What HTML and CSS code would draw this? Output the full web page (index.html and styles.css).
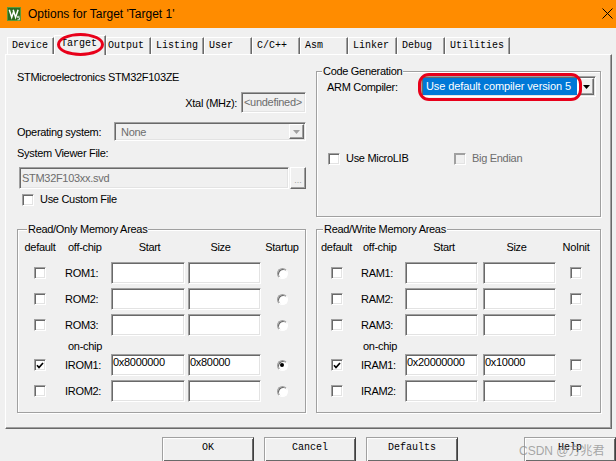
FILE: index.html
```html
<!DOCTYPE html>
<html>
<head>
<meta charset="utf-8">
<title>Options for Target 'Target 1'</title>
<link rel="stylesheet" href="styles.css">
</head>
<body>
<div class="window">
  <header class="titlebar">
    <svg class="appicon" width="14" height="14" viewBox="0 0 14 14"><rect x="0.5" y="0.5" width="13" height="13" fill="#2f6b1f" stroke="#5a9a3a"/><path d="M2.3 2.8l2.4 7.6 2-6.2M6.2 2.8l2.4 7.6 2.5-7.6" stroke="#fff" stroke-width="1.5" fill="none"/><path d="M12.6 9.3h-2v1.4h1.9v2h-2" stroke="#fff" stroke-width="0.8" fill="none"/></svg>
    <span class="title">Options for Target 'Target 1'</span>
    <svg class="close" width="11" height="11" viewBox="0 0 11 11"><path d="M0.5 0.5L10.5 10.5M10.5 0.5L0.5 10.5" stroke="#000" stroke-width="1" fill="none"/></svg>
  </header>

  <div class="client">
    <nav class="tabs">
      <div class="tab t-device">Device</div>
      <div class="tab t-target selected">Target</div>
      <div class="tab t-output">Output</div>
      <div class="tab t-listing">Listing</div>
      <div class="tab t-user">User</div>
      <div class="tab t-cc">C/C++</div>
      <div class="tab t-asm">Asm</div>
      <div class="tab t-linker">Linker</div>
      <div class="tab t-debug">Debug</div>
      <div class="tab t-util">Utilities</div>
    </nav>

    <section class="panel">
      <div class="device">
        <div class="dev-name">STMicroelectronics STM32F103ZE</div>
        <div class="xtal-row">
          <span>Xtal (MHz):</span>
          <div class="field disabled xtal">&lt;undefined&gt;</div>
        </div>
        <div class="os-row">
          <span class="os-label">Operating system:</span>
          <div class="field disabled combo os">
            <span class="combo-text">None</span>
            <span class="arrow-btn"><svg width="7" height="4" viewBox="0 0 7 4"><path d="M0 0h7L3.5 4z" fill="#a0a0a0"/></svg></span>
          </div>
        </div>
        <div class="svf-label">System Viewer File:</div>
        <div class="svd-row">
          <div class="field disabled svd">STM32F103xx.svd</div>
          <div class="dots">...</div>
        </div>
        <div class="check-row custom"><span class="chk"></span><span>Use Custom File</span></div>
      </div>

      <fieldset class="group codegen">
        <legend>Code Generation</legend>
        <div class="arm-row">
          <span class="arm-label">ARM Compiler:</span>
          <div class="field combo compiler">
            <span class="sel">Use default compiler version 5</span>
            <span class="arrow-btn"><svg width="7" height="4" viewBox="0 0 7 4"><path d="M0 0h7L3.5 4z" fill="#000"/></svg></span>
          </div>
        </div>
        <div class="lib-row">
          <div class="check-row microlib"><span class="chk"></span><span>Use MicroLIB</span></div>
          <div class="check-row endian disabled"><span class="chk"></span><span>Big Endian</span></div>
        </div>
      </fieldset>

      <fieldset class="group mem rom">
        <legend>Read/Only Memory Areas</legend>
        <div class="mem-grid rom-grid">
          <span class="hd c">default</span><span class="hd off">off-chip</span><span class="hd c">Start</span><span class="hd c size-hd">Size</span><span class="hd c">Startup</span>

          <span class="cell"><span class="chk"></span></span><span class="lbl">ROM1:</span><div class="field mem-in start"></div><div class="field mem-in"></div><span class="cell"><span class="radio"></span></span>
          <span class="cell"><span class="chk"></span></span><span class="lbl">ROM2:</span><div class="field mem-in start"></div><div class="field mem-in"></div><span class="cell"><span class="radio"></span></span>
          <span class="cell"><span class="chk"></span></span><span class="lbl">ROM3:</span><div class="field mem-in start"></div><div class="field mem-in"></div><span class="cell"><span class="radio"></span></span>

          <span class="hd off onchip">on-chip</span>

          <span class="cell"><span class="chk checked"><svg width="8" height="7" viewBox="0 0 8 7"><path d="M1 3.3l2 2.2L7 1" stroke="#000" stroke-width="1.7" fill="none"/></svg></span></span><span class="lbl">IROM1:</span><div class="field mem-in start">0x8000000</div><div class="field mem-in">0x80000</div><span class="cell"><span class="radio on"><span class="dot"></span></span></span>
          <span class="cell"><span class="chk"></span></span><span class="lbl">IROM2:</span><div class="field mem-in start"></div><div class="field mem-in"></div><span class="cell"><span class="radio"></span></span>
        </div>
      </fieldset>

      <fieldset class="group mem ram">
        <legend>Read/Write Memory Areas</legend>
        <div class="mem-grid ram-grid">
          <span class="hd c">default</span><span class="hd off">off-chip</span><span class="hd c">Start</span><span class="hd c size-hd">Size</span><span class="hd c">NoInit</span>

          <span class="cell"><span class="chk"></span></span><span class="lbl">RAM1:</span><div class="field mem-in"></div><div class="field mem-in"></div><span class="cell"><span class="chk"></span></span>
          <span class="cell"><span class="chk"></span></span><span class="lbl">RAM2:</span><div class="field mem-in"></div><div class="field mem-in"></div><span class="cell"><span class="chk"></span></span>
          <span class="cell"><span class="chk"></span></span><span class="lbl">RAM3:</span><div class="field mem-in"></div><div class="field mem-in"></div><span class="cell"><span class="chk"></span></span>

          <span class="hd off onchip">on-chip</span>

          <span class="cell"><span class="chk checked"><svg width="8" height="7" viewBox="0 0 8 7"><path d="M1 3.3l2 2.2L7 1" stroke="#000" stroke-width="1.7" fill="none"/></svg></span></span><span class="lbl">IRAM1:</span><div class="field mem-in">0x20000000</div><div class="field mem-in">0x10000</div><span class="cell"><span class="chk"></span></span>
          <span class="cell"><span class="chk"></span></span><span class="lbl">IRAM2:</span><div class="field mem-in"></div><div class="field mem-in"></div><span class="cell"><span class="chk"></span></span>
        </div>
      </fieldset>
    </section>

    <div class="buttons">
      <div class="btn">OK</div>
      <div class="btn">Cancel</div>
      <div class="btn">Defaults</div>
      <div class="btn help">Help</div>
    </div>
  </div>

  <div class="mark mark-tab"></div>
  <div class="mark mark-compiler"></div>
  <div class="watermark">CSDN @方兆君子</div>
</div>
</body>
</html>
```

FILE: styles.css
```css
* { box-sizing: border-box; }
html, body { margin: 0; padding: 0; }
body {
  width: 616px;
  height: 461px;
  overflow: hidden;
  background: #f0f0f0;
  font-family: "Liberation Sans", Arial, sans-serif;
  font-size: 11px;
  letter-spacing: -0.3px;
  color: #000;
}
.window { position: relative; width: 616px; height: 461px; overflow: hidden; }

/* title bar */
.titlebar {
  height: 28px;
  background: #ff8c00;
  display: flex;
  align-items: center;
  padding-left: 7px;
}
.appicon { display: block; flex: none; }
.title { margin-left: 7px; font-size: 12px; letter-spacing: 0; line-height: 28px; }
.close { margin-left: auto; margin-right: 3px; margin-bottom: 2px; display: block; }

/* tabs */
.client { padding: 7px 0 0 5px; }
.tabs { display: flex; align-items: flex-end; height: 19px; padding-left: 2px; }
.tab {
  height: 17px;
  flex: none;
  border-top: 1px solid #fff;
  border-left: 1px solid #fff;
  border-right: 1px solid #696969;
  box-shadow: inset -1px 0 #a0a0a0;
  font-family: "Liberation Mono", monospace;
  font-size: 10px;
  letter-spacing: 0;
  line-height: 16px;
  padding-left: 4px;
  white-space: nowrap;
  overflow: hidden;
}
.tab.selected {
  height: 20px;
  margin-bottom: -1px;
  position: relative;
  z-index: 2;
  background: #f0f0f0;
  padding-left: 6px;
}
.t-device { width: 47px; }
.t-target { width: 52px; }
.t-output { width: 45px; padding-left: 1px; }
.t-listing { width: 53px; }
.t-user { width: 48px; }
.t-cc { width: 48px; }
.t-asm { width: 48px; }
.t-linker { width: 49px; }
.t-debug { width: 48px; }
.t-util { width: 65px; }

/* panel */
.panel {
  width: 607px;
  height: 375px;
  border: 1px solid;
  border-color: #fff #696969 #696969 #fff;
  box-shadow: inset -1px -1px #a0a0a0;
  padding: 10px 0 0 11px;
  display: grid;
  grid-template-columns: 289px 285px;
  grid-template-rows: 152px 190px;
  column-gap: 10px;
  row-gap: 6px;
}

/* 3D fields */
.field {
  border: 1px solid;
  border-color: #a0a0a0 #fff #fff #a0a0a0;
  box-shadow: inset 1px 1px #696969, inset -1px -1px #e3e3e3;
  background: #fff;
}
.field.disabled { background: #f0f0f0; color: #6d6d6d; }
.combo { display: flex; padding: 1px; }
.arrow-btn {
  width: 15px;
  flex: none;
  display: flex;
  align-items: center;
  justify-content: center;
  border: 1px solid;
  border-color: #fff #696969 #696969 #fff;
  box-shadow: inset -1px -1px #a0a0a0;
  background: #f0f0f0;
}
.arrow-btn svg { display: block; }

/* device column */
.device { display: flex; flex-direction: column; }
.dev-name { margin-top: 6px; line-height: 13px; }
.xtal-row { margin-top: 8px; display: flex; justify-content: flex-end; align-items: center; gap: 4px; }
.xtal { width: 65px; height: 21px; padding-left: 2px; line-height: 19px; white-space: nowrap; overflow: hidden; }
.os-row { margin-top: 9px; display: flex; align-items: center; }
.os-label { width: 97px; flex: none; }
.os { flex: 1; height: 19px; }
.combo-text { flex: 1; padding-left: 5px; line-height: 17px; }
.svf-label { margin-top: 6px; line-height: 13px; }
.svd-row { margin-top: 7px; display: flex; gap: 1px; height: 22px; }
.svd { margin-left: 2px; width: 270px; padding-left: 2px; line-height: 20px; }
.dots {
  width: 16px;
  border: 1px solid;
  border-color: #fff #696969 #696969 #fff;
  box-shadow: inset -1px -1px #a0a0a0;
  color: #a0a0a0;
  text-align: center;
  line-height: 24px;
  font-size: 9px;
  letter-spacing: 0;
}

/* checkbox / radio */
.check-row { display: flex; align-items: center; gap: 6px; line-height: 13px; }
.custom { margin-top: 4px; padding-left: 5px; }
.chk {
  width: 12px;
  height: 12px;
  flex: none;
  display: flex;
  align-items: center;
  justify-content: center;
  border: 1px solid;
  border-color: #a0a0a0 #fff #fff #a0a0a0;
  box-shadow: inset 1px 1px #696969, inset -1px -1px #e3e3e3;
  background: #fff;
}
.chk svg { display: block; }
.disabled .chk { background: #f0f0f0; box-shadow: inset 1px 1px #a0a0a0, inset -1px -1px #e3e3e3; }
.check-row.disabled { color: #6d6d6d; }
.radio {
  width: 11px;
  height: 11px;
  border-radius: 50%;
  border: 1px solid;
  border-color: #a0a0a0 #fff #fff #a0a0a0;
  box-shadow: inset 1px 1px #696969;
  background: #fff;
  display: flex;
  align-items: center;
  justify-content: center;
}
.dot { width: 4px; height: 4px; border-radius: 50%; background: #000; }

/* group boxes */
.group {
  margin: 0;
  padding: 0;
  min-width: 0;
  border: 1px solid #a0a0a0;
  box-shadow: inset 1px 1px #fff, 1px 1px #fff;
}
.group legend { padding: 0 1px; line-height: 12px; background: #f0f0f0; }
.codegen { padding: 0 3px 0 10px; }
.codegen legend { margin-left: -5px; }
.rom legend { margin-left: 9px; }
.ram legend { margin-left: 6px; }

.arm-row { margin-top: -1px; display: flex; align-items: center; }
.arm-label { width: 94px; flex: none; }
.compiler { width: 175px; height: 21px; flex: none; }
.compiler .sel {
  flex: 1;
  margin-right: 2px;
  background: #0078d7;
  color: #fff;
  letter-spacing: -0.1px;
  padding-left: 3px;
  line-height: 17px;
  white-space: nowrap;
  overflow: hidden;
}
.lib-row { margin-top: 55px; display: flex; }
.microlib { width: 126px; margin-left: 1px; }

/* memory grids */
.mem-grid {
  display: grid;
  margin-top: 6px;
  grid-template-rows: 17px 22px 22px 22px 10px 22px 22px;
  row-gap: 4px;
  align-items: center;
}
.rom-grid { grid-template-columns: 44px 49px 77px 73px 42px; }
.ram-grid { grid-template-columns: 39px 49px 78px 73px 40px; }
.hd { align-self: start; line-height: 13px; white-space: nowrap; }
.c { text-align: center; }
.rom-grid .off { padding-left: 6px; }
.ram-grid .off { padding-left: 7px; }
.rom-grid .size-hd { padding-right: 8px; }
.ram-grid .size-hd { padding-right: 6px; }
.onchip { grid-column: 2 / -1; }
.cell { display: flex; justify-content: center; align-items: center; }
.lbl { white-space: nowrap; }
.rom-grid .lbl { padding-left: 3px; }
.ram-grid .lbl { padding-left: 5px; }
.mem-in {
  width: 73px;
  height: 22px;
  padding: 1px 0 0 1px;
  line-height: 13px;
  white-space: nowrap;
  overflow: hidden;
}
.rom-grid .start { width: 74px; }

/* buttons */
.buttons { display: flex; gap: 10px; margin-top: 8px; padding-left: 157px; }
.btn {
  width: 92px;
  height: 25px;
  flex: none;
  border: 1px solid;
  border-color: #a0a0a0 #404040 #404040 #a0a0a0;
  box-shadow: inset 1px 1px #fff, inset -1px -1px #696969;
  font-family: "Liberation Mono", monospace;
  font-size: 10px;
  letter-spacing: 0;
  text-align: center;
  line-height: 20px;
}
.help { margin-left: 56px; }

/* overlays */
.mark { position: absolute; z-index: 5; border: 3px solid #e8001a; }
.mark-tab { left: 57px; top: 33px; width: 47px; height: 23px; border-radius: 50%; }
.mark-compiler { left: 418px; top: 73px; width: 164px; height: 28px; border-radius: 11px; }
.watermark {
  position: absolute;
  z-index: 5;
  left: 519px;
  top: 441px;
  font-family: "Liberation Sans", "Noto Sans CJK SC", sans-serif;
  font-size: 12px;
  letter-spacing: 0;
  color: rgba(140, 140, 140, 0.75);
}
```
